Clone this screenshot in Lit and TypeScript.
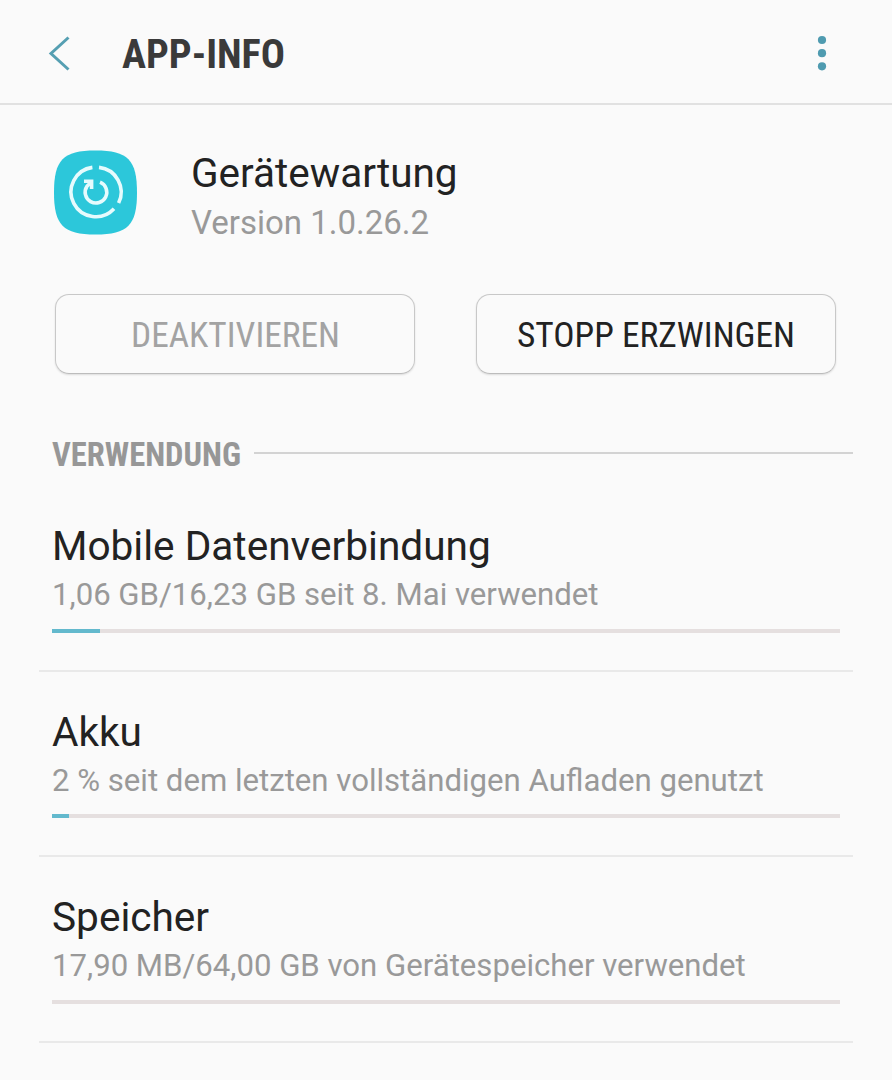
import { LitElement, html, css, svg } from "lit";
import { customElement, property } from "lit/decorators.js";

interface Usage {
  title: string;
  detail: string;
  percent: number;
}

const USAGE: Usage[] = [
  { title: "Mobile Datenverbindung", detail: "1,06 GB/16,23 GB seit 8. Mai verwendet", percent: 6.1 },
  { title: "Akku", detail: "2 % seit dem letzten vollständigen Aufladen genutzt", percent: 2.1 },
  { title: "Speicher", detail: "17,90 MB/64,00 GB von Gerätespeicher verwendet", percent: 0 },
];

/** Condensed caption set to a fixed measure. */
@customElement("condensed-label")
class CondensedLabel extends LitElement {
  @property() text = "";
  @property({ type: Number }) measure = 100;
  @property({ type: Number }) size = 32;

  static styles = css`
    :host { display: block; flex: none; }
    svg { display: block; overflow: visible; }
    text {
      font-family: "Roboto Condensed", Roboto, sans-serif;
      font-stretch: 75%;
      fill: currentColor;
    }
  `;

  render() {
    const height = Math.round(this.size * 1.2);
    return html`<svg width=${this.measure} height=${height}>
      ${svg`<text x="0" y=${this.size * 0.956} font-size=${this.size} textLength=${this.measure} lengthAdjust="spacingAndGlyphs">${this.text}</text>`}
    </svg>`;
  }
}

@customElement("usage-row")
class UsageRow extends LitElement {
  @property({ attribute: false }) item!: Usage;

  static styles = css`
    :host {
      display: block;
      box-sizing: border-box;
      height: 185.7px;
      margin: 0 39px;
      padding: 36px 13px 0;
      border-bottom: 2px solid #e9e9e9;
    }
    .title { font-size: 40.6px; line-height: 48px; color: #222; white-space: nowrap; }
    .detail { margin-top: 5px; font-size: 31.15px; line-height: 40px; color: #999; white-space: nowrap; }
    .track { margin-top: 13.7px; height: 4px; background: #e5dfdf; }
    .fill { height: 4px; background: #63b9cd; }
  `;

  render() {
    return html`
      <div class="title">${this.item.title}</div>
      <div class="detail">${this.item.detail}</div>
      <div class="track"><div class="fill" style="width:${this.item.percent}%"></div></div>
    `;
  }
}

@customElement("app-root")
class AppRoot extends LitElement {
  static styles = css`
    :host {
      display: block;
      box-sizing: border-box;
      height: 1080px;
      overflow: hidden;
      background: #fafafa;
      font-family: Roboto, sans-serif;
    }
    .header {
      box-sizing: border-box;
      height: 105px;
      display: flex;
      align-items: flex-start;
      padding: 30px 64px 0 48px;
      border-bottom: 2px solid #e1e1e1;
    }
    .back { width: 24px; height: 48px; display: block; }
    .heading { margin-left: 49.5px; color: #3a3a3a; font-weight: 700; }
    .more { margin-left: auto; width: 12px; height: 48px; display: block; }
    .app { display: flex; height: 189px; }
    .icon { width: 90px; height: 90px; margin: 43px 0 0 50px; flex: none; }
    .meta { margin: 43.5px 0 0 51px; }
    .name { font-size: 40.5px; line-height: 48px; color: #222; }
    .version { margin-top: 6px; font-size: 33px; line-height: 40px; color: #999; }
    .actions { display: flex; gap: 61px; padding-left: 55px; }
    .button {
      box-sizing: border-box;
      width: 360px;
      height: 80px;
      display: flex;
      justify-content: center;
      padding-top: 19px;
      border: 1.5px solid #c8c8c8;
      border-bottom-color: #bcbcbc;
      border-radius: 14px;
      box-shadow: 0 1px 2px rgba(0, 0, 0, 0.12);
      color: #222;
    }
    .button.disabled { color: #a3a3a3; }
    .section {
      display: flex;
      align-items: flex-start;
      height: 52px;
      padding: 60px 39px 0 52px;
      color: #979797;
      font-weight: 700;
    }
    .rule { flex: 1; margin: 18px 0 0 13px; height: 2px; background: #d3d3d3; }
  `;

  render() {
    return html`
      <div class="header">
        <svg class="back" viewBox="0 0 24 48" fill="none" stroke="#559fb2" stroke-width="3">
          <path d="M20.5 7.5 3 23.5 20.5 39.5" />
        </svg>
        <condensed-label class="heading" text="APP-INFO" .measure=${163} .size=${40}></condensed-label>
        <svg class="more" viewBox="0 0 12 48" fill="#4f9bb0">
          <circle cx="6" cy="10" r="4.1" />
          <circle cx="6" cy="23.2" r="4.1" />
          <circle cx="6" cy="36.3" r="4.1" />
        </svg>
      </div>
      <div class="app">
        <svg class="icon" viewBox="0 0 90 90" fill="none">
          <path d="M45.5 2.5C78 2.5 87 12 87 44.5S78 86.5 45.5 86.5 4 77 4 44.5 13 2.5 45.5 2.5Z" fill="#2cc7da" />
          <g stroke="#e6fbfd" stroke-width="3.6">
            <path d="M42.4 19.4A24.8 24.8 0 1 0 64 60.8" />
            <path d="M49 19.4A24.8 24.8 0 0 1 68.6 55" />
            <path d="M50 34.2A10.8 10.8 0 1 1 37 38.2L41.2 34.2" />
            <path d="M34 33.2H41.6V41" />
          </g>
        </svg>
        <div class="meta">
          <div class="name">Gerätewartung</div>
          <div class="version">Version 1.0.26.2</div>
        </div>
      </div>
      <div class="actions">
        <div class="button disabled">
          <condensed-label text="DEAKTIVIEREN" .measure=${209} .size=${35}></condensed-label>
        </div>
        <div class="button">
          <condensed-label text="STOPP ERZWINGEN" .measure=${278} .size=${35}></condensed-label>
        </div>
      </div>
      <div class="section">
        <condensed-label text="VERWENDUNG" .measure=${189} .size=${33}></condensed-label>
        <div class="rule"></div>
      </div>
      ${USAGE.map((item) => html`<usage-row .item=${item}></usage-row>`)}
    `;
  }
}
